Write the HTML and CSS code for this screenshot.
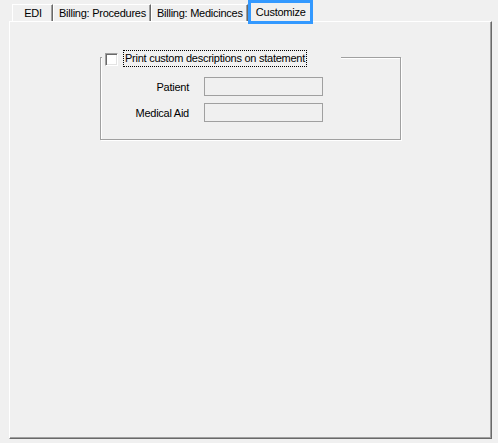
FILE: index.html
```html
<!DOCTYPE html>
<html lang="en">
<head>
    <meta charset="UTF-8">
    <title>Customize</title>
    <link rel="stylesheet" href="styles.css">
</head>
<body>
    <div class="tabs">
        <div class="tab">EDI</div>
        <div class="tab">Billing: Procedures</div>
        <div class="tab">Billing: Medicinces</div>
        <div class="tab active">Customize</div>
    </div>

    <div class="panel">
        <div class="group">
            <div class="legend">
                <input type="checkbox" class="check">
                <span class="legend-label">Print custom descriptions on statement</span>
            </div>
            <div class="fields">
                <label class="field-label">Patient</label>
                <input type="text" class="field" disabled>
                <label class="field-label">Medical Aid</label>
                <input type="text" class="field" disabled>
            </div>
        </div>
    </div>
</body>
</html>
```

FILE: styles.css
```css
body {
    margin: 0;
    width: 498px;
    height: 443px;
    background: #f0f0f0;
    font-family: 'Liberation Sans', Arial, sans-serif;
    font-size: 11px;
    letter-spacing: -0.25px;
    color: #000;
    overflow: hidden;
}

/* Tab strip */
.tabs {
    display: flex;
    align-items: flex-end;
    height: 21px;
    padding-left: 12px;
}

.tab {
    box-sizing: border-box;
    height: 17px;
    min-width: 41px;
    padding: 0 4px 0 5px;
    display: flex;
    align-items: center;
    justify-content: center;
    border-top: 1px solid #fff;
    border-left: 1px solid #fff;
    border-right: 1px solid #696969;
    box-shadow: inset -1px 0 #a0a0a0;
}

.tab.active {
    height: 24px;
    width: 65px;
    margin-bottom: -3px;
    padding-bottom: 1px;
    border: 3px solid #3399ff;
    box-shadow: none;
    background: #f0f0f0;
    position: relative;
    z-index: 1;
}

/* Page panel */
.panel {
    box-sizing: border-box;
    margin-left: 9px;
    width: 483px;
    height: 418px;
    border-top: 1px solid #fff;
    border-left: 1px solid #fff;
    border-right: 1px solid #696969;
    border-bottom: 1px solid #696969;
    box-shadow: inset -1px -1px #a0a0a0;
    padding-top: 35px;
    padding-left: 90px;
}

/* Group box */
.group {
    box-sizing: border-box;
    position: relative;
    width: 301px;
    height: 83px;
    border: 1px solid #a0a0a0;
    box-shadow: 1px 1px 0 #fff, inset 1px 1px 0 #fff;
    padding-top: 19px;
}

.legend {
    position: absolute;
    left: 1px;
    top: -8px;
    width: 239px;
    height: 17px;
    display: flex;
    align-items: flex-start;
    background: #f0f0f0;
}

.check {
    appearance: none;
    box-sizing: border-box;
    width: 13px;
    height: 13px;
    margin: 3px 0 0 3px;
    border: 1px solid;
    border-color: #a0a0a0 #fff #fff #a0a0a0;
    box-shadow: inset 1px 1px #696969, inset -1px -1px #e3e3e3;
    background: #fff;
}

.legend-label {
    box-sizing: border-box;
    height: 17px;
    margin-left: 5px;
    padding: 0 1px;
    line-height: 15px;
    border: 1px dotted #000;
}

.fields {
    display: grid;
    grid-template-columns: 88px 119px;
    column-gap: 15px;
    row-gap: 7px;
}

.field-label {
    text-align: right;
    align-self: center;
    padding-top: 1px;
}

.field {
    box-sizing: border-box;
    width: 119px;
    height: 19px;
    margin: 0;
    border: 1px solid #a0a0a0;
    background: #f0f0f0;
}
```
